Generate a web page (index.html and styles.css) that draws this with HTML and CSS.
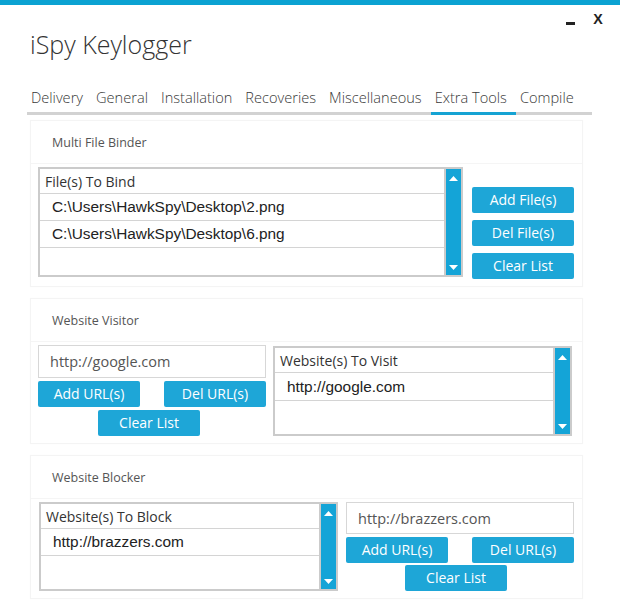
FILE: index.html
```html
<!DOCTYPE html>
<html lang="en">
<head>
<meta charset="utf-8">
<title>iSpy Keylogger</title>
<link rel="stylesheet" href="styles.css">
</head>
<body>
<div class="topbar"></div>
<header class="titlebar">
  <h1 class="title">iSpy Keylogger</h1>
  <div class="winctl">
    <span class="min" aria-label="Minimize"></span>
    <span class="close">X</span>
  </div>
</header>
<nav class="tabs">
  <span class="tab">Delivery</span>
  <span class="tab">General</span>
  <span class="tab">Installation</span>
  <span class="tab">Recoveries</span>
  <span class="tab">Miscellaneous</span>
  <span class="tab active">Extra Tools</span>
  <span class="tab">Compile</span>
</nav>
<main class="panels">
  <section class="panel">
    <div class="panel-head">Multi File Binder</div>
    <div class="panel-body binder">
      <div class="listbox lb-binder">
        <div class="list">
          <div class="row head">File(s) To Bind</div>
          <div class="row item">C:\Users\HawkSpy\Desktop\2.png</div>
          <div class="row item">C:\Users\HawkSpy\Desktop\6.png</div>
          <div class="row empty"></div>
        </div>
        <div class="scroll">
          <svg width="9" height="5" viewBox="0 0 9 5"><path d="M0 5 L4.5 0 L9 5 Z" fill="#fff"/></svg>
          <svg width="9" height="5" viewBox="0 0 9 5"><path d="M0 0 L4.5 5 L9 0 Z" fill="#fff"/></svg>
        </div>
      </div>
      <div class="btncol">
        <button class="btn">Add File(s)</button>
        <button class="btn">Del File(s)</button>
        <button class="btn">Clear List</button>
      </div>
    </div>
  </section>

  <section class="panel">
    <div class="panel-head">Website Visitor</div>
    <div class="panel-body visitor">
      <div class="urlcol">
        <div class="input">http://google.com</div>
        <div class="btnrow">
          <button class="btn">Add URL(s)</button>
          <button class="btn">Del URL(s)</button>
        </div>
        <button class="btn center">Clear List</button>
      </div>
      <div class="listbox lb-visit">
        <div class="list">
          <div class="row head">Website(s) To Visit</div>
          <div class="row item tall">http://google.com</div>
          <div class="row empty"></div>
        </div>
        <div class="scroll">
          <svg width="9" height="5" viewBox="0 0 9 5"><path d="M0 5 L4.5 0 L9 5 Z" fill="#fff"/></svg>
          <svg width="9" height="5" viewBox="0 0 9 5"><path d="M0 0 L4.5 5 L9 0 Z" fill="#fff"/></svg>
        </div>
      </div>
    </div>
  </section>

  <section class="panel">
    <div class="panel-head">Website Blocker</div>
    <div class="panel-body blocker">
      <div class="listbox lb-block">
        <div class="list">
          <div class="row head">Website(s) To Block</div>
          <div class="row item">http://brazzers.com</div>
          <div class="row empty"></div>
        </div>
        <div class="scroll">
          <svg width="9" height="5" viewBox="0 0 9 5"><path d="M0 5 L4.5 0 L9 5 Z" fill="#fff"/></svg>
          <svg width="9" height="5" viewBox="0 0 9 5"><path d="M0 0 L4.5 5 L9 0 Z" fill="#fff"/></svg>
        </div>
      </div>
      <div class="urlcol">
        <div class="input">http://brazzers.com</div>
        <div class="btnrow">
          <button class="btn">Add URL(s)</button>
          <button class="btn">Del URL(s)</button>
        </div>
        <button class="btn center">Clear List</button>
      </div>
    </div>
  </section>
</main>
</body>
</html>
```

FILE: styles.css
```css
* { box-sizing: border-box; }

body {
  margin: 0;
  width: 620px;
  height: 613px;
  overflow: hidden;
  background: #ffffff;
  font-family: "Open Sans", "DejaVu Sans", sans-serif;
  color: #333333;
}

.topbar {
  height: 5px;
  background: #0ba2d2;
}

.titlebar {
  display: flex;
  justify-content: space-between;
  align-items: flex-start;
  padding: 0 17px 0 30px;
}

.title {
  margin: 23px 0 0;
  font-size: 25px;
  font-weight: 300;
  line-height: 32px;
  color: #333333;
}

.winctl {
  display: flex;
  align-items: flex-end;
  gap: 18px;
  padding-top: 6px;
}

.min {
  display: block;
  width: 9px;
  height: 3px;
  margin-bottom: 2px;
  background: #222222;
}

.close {
  font-family: "Liberation Sans", Arial, sans-serif;
  font-size: 15px;
  font-weight: bold;
  line-height: 16px;
  color: #222222;
  transform: scaleX(0.95);
}

.tabs {
  display: flex;
  margin: 27px 28px 0 27px;
  border-bottom: 3px solid #d2d2d2;
}

.tab {
  padding: 0 9px 5px 4px;
  font-size: 14.6px;
  font-weight: 300;
  line-height: 20px;
  color: #383838;
  white-space: nowrap;
}

.tab.active {
  border-bottom: 3px solid #15a3d3;
  margin-bottom: -3px;
}

.panels {
  display: flex;
  flex-direction: column;
  gap: 11px;
  margin: 5px 0 0 30px;
  width: 553px;
}

.panel {
  border: 1px solid #f4f4f4;
  background: #ffffff;
  box-shadow: 0 0 2px rgba(0, 0, 0, 0.02);
}

.panel-head {
  height: 43px;
  display: flex;
  align-items: center;
  padding-left: 21px;
  font-size: 12.5px;
  color: #555555;
  border-bottom: 1px solid #f5f5f5;
}

.panel-body {
  display: flex;
  padding: 3px 8px 7px 7px;
}

.binder { gap: 9px; }
.visitor { gap: 7px; }
.blocker { gap: 8px; padding-left: 8px; }

/* list boxes */
.listbox {
  display: flex;
  border: 2px solid #cbcbcb;
  background: #ffffff;
}

.lb-binder { width: 425px; height: 110px; }
.lb-visit { width: 299px; height: 90px; margin-top: 1px; }
.lb-block { width: 299px; height: 89px; }

.list {
  flex: 1;
  display: flex;
  flex-direction: column;
  min-width: 0;
}

.row {
  display: flex;
  align-items: center;
  height: 27px;
  flex: none;
  border-bottom: 1px solid #d4d4d4;
  white-space: nowrap;
}

.row.head {
  height: 25px;
  padding-left: 5px;
  font-size: 14px;
  color: #333333;
}

.row.item {
  padding-left: 12px;
  font-family: "Liberation Sans", Arial, sans-serif;
  font-size: 15.4px;
  color: #222222;
}

.row.tall { height: 28px; }

.row.empty {
  flex: 1;
  border-bottom: none;
}

.scroll {
  width: 17px;
  flex: none;
  display: flex;
  flex-direction: column;
  align-items: center;
  justify-content: space-between;
  padding: 7px 0 5px;
  background: #14a4d7;
  border-left: 2px solid #cbcbcb;
}

.scroll svg { display: block; }

/* buttons */
.btn {
  display: flex;
  align-items: center;
  justify-content: center;
  width: 102px;
  height: 26px;
  padding: 0;
  border: none;
  border-radius: 2px;
  background: #1ea6d7;
  color: #ffffff;
  font-family: "Open Sans", "DejaVu Sans", sans-serif;
  font-size: 14px;
  line-height: 1;
}

.btncol {
  display: flex;
  flex-direction: column;
  gap: 7px;
  padding-top: 20px;
}

.urlcol {
  width: 228px;
  display: flex;
  flex-direction: column;
}

.input {
  height: 33px;
  display: flex;
  align-items: center;
  padding-left: 11px;
  border: 1px solid #d7d7d7;
  background: #ffffff;
  font-size: 14.5px;
  color: #555555;
}

.blocker .input { height: 32px; }

.btnrow {
  display: flex;
  justify-content: space-between;
  margin-top: 3px;
}

.btn.center {
  align-self: center;
  margin-top: 3px;
  margin-right: 6px;
}

.blocker .btn.center { margin-top: 2px; margin-right: 8px; }
```
